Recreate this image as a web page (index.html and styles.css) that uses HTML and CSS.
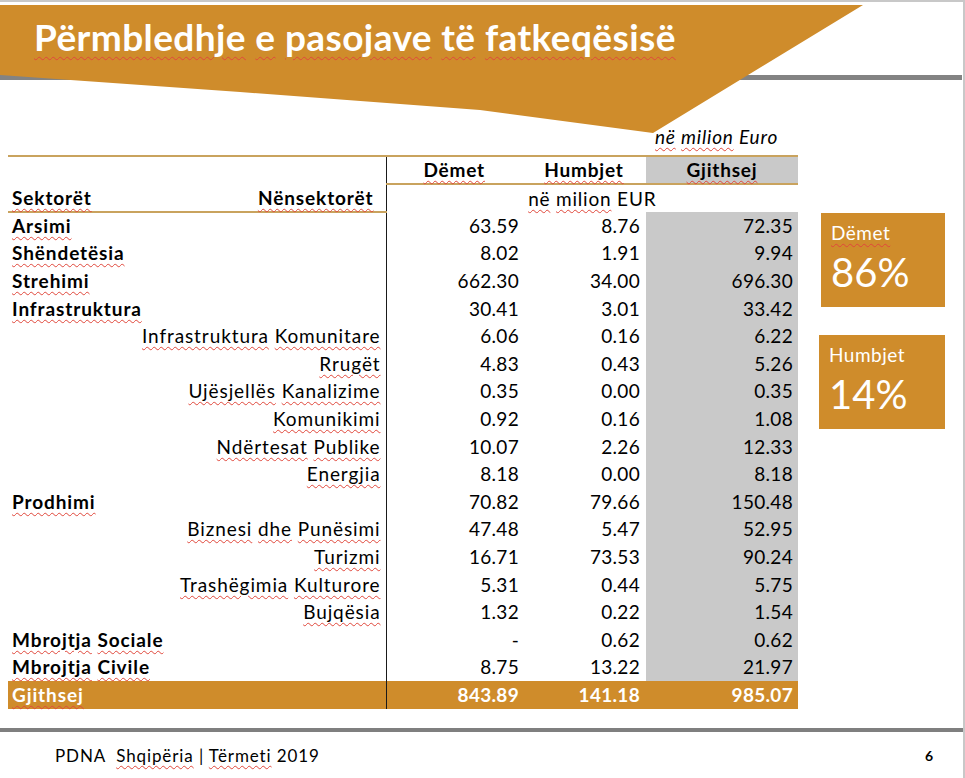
FILE: index.html
```html
<!DOCTYPE html>
<html lang="sq">
<head>
<meta charset="utf-8">
<title>Përmbledhje e pasojave të fatkeqësisë</title>
<link rel="stylesheet" href="styles.css">
</head>
<body>
<div class="slide">
  <header class="head">
    <svg class="banner" width="965" height="140" viewBox="0 0 965 140" aria-hidden="true">
      <rect x="0" y="75" width="962" height="5" fill="#838383"/>
      <polygon points="0,5 863,5 653,133 480,110 240,92 0,75" fill="#cf8c2b"/>
    </svg>
    <h1 class="title"><span class="sp">Përmbledhje</span> <span class="sp">e</span> <span class="sp">pasojave</span> <span class="sp">të</span> <span class="sp">fatkeqësisë</span></h1>
    <div class="unit"><span class="sp">në</span> <span class="sp">milion</span> Euro</div>
  </header>

  <main class="body">
    <table class="tbl">
      <colgroup>
        <col class="c-label"><col class="c-dem"><col class="c-hum"><col class="c-tot">
      </colgroup>
      <thead>
        <tr class="h1">
          <th class="lab"></th>
          <th class="num-h"><span class="sp">Dëmet</span></th>
          <th class="num-h"><span class="sp">Humbjet</span></th>
          <th class="num-h tot"><span class="sp">Gjithsej</span></th>
        </tr>
        <tr class="h2">
          <th class="lab split"><span class="sp">Sektorët</span><span class="sp">Nënsektorët</span></th>
          <th colspan="3" class="unit2"><span class="sp">në</span> <span class="sp">milion</span> EUR</th>
        </tr>
      </thead>
      <tbody>
        <tr><td class="lab sec"><span class="sp">Arsimi</span></td><td>63.59</td><td>8.76</td><td class="tot">72.35</td></tr>
        <tr><td class="lab sec"><span class="sp">Shëndetësia</span></td><td>8.02</td><td>1.91</td><td class="tot">9.94</td></tr>
        <tr><td class="lab sec"><span class="sp">Strehimi</span></td><td>662.30</td><td>34.00</td><td class="tot">696.30</td></tr>
        <tr><td class="lab sec"><span class="sp">Infrastruktura</span></td><td>30.41</td><td>3.01</td><td class="tot">33.42</td></tr>
        <tr><td class="lab sub"><span class="sp">Infrastruktura</span> <span class="sp">Komunitare</span></td><td>6.06</td><td>0.16</td><td class="tot">6.22</td></tr>
        <tr><td class="lab sub"><span class="sp">Rrugët</span></td><td>4.83</td><td>0.43</td><td class="tot">5.26</td></tr>
        <tr><td class="lab sub"><span class="sp">Ujësjellës</span> <span class="sp">Kanalizime</span></td><td>0.35</td><td>0.00</td><td class="tot">0.35</td></tr>
        <tr><td class="lab sub"><span class="sp">Komunikimi</span></td><td>0.92</td><td>0.16</td><td class="tot">1.08</td></tr>
        <tr><td class="lab sub"><span class="sp">Ndërtesat</span> <span class="sp">Publike</span></td><td>10.07</td><td>2.26</td><td class="tot">12.33</td></tr>
        <tr><td class="lab sub"><span class="sp">Energjia</span></td><td>8.18</td><td>0.00</td><td class="tot">8.18</td></tr>
        <tr><td class="lab sec"><span class="sp">Prodhimi</span></td><td>70.82</td><td>79.66</td><td class="tot">150.48</td></tr>
        <tr><td class="lab sub"><span class="sp">Biznesi</span> <span class="sp">dhe</span> <span class="sp">Punësimi</span></td><td>47.48</td><td>5.47</td><td class="tot">52.95</td></tr>
        <tr><td class="lab sub"><span class="sp">Turizmi</span></td><td>16.71</td><td>73.53</td><td class="tot">90.24</td></tr>
        <tr><td class="lab sub"><span class="sp">Trashëgimia</span> <span class="sp">Kulturore</span></td><td>5.31</td><td>0.44</td><td class="tot">5.75</td></tr>
        <tr><td class="lab sub"><span class="sp">Bujqësia</span></td><td>1.32</td><td>0.22</td><td class="tot">1.54</td></tr>
        <tr><td class="lab sec"><span class="sp">Mbrojtja</span> <span class="sp">Sociale</span></td><td>-</td><td>0.62</td><td class="tot">0.62</td></tr>
        <tr><td class="lab sec"><span class="sp">Mbrojtja</span> <span class="sp">Civile</span></td><td>8.75</td><td>13.22</td><td class="tot">21.97</td></tr>
      </tbody>
      <tfoot>
        <tr class="total"><td class="lab sec"><span class="sp">Gjithsej</span></td><td>843.89</td><td>141.18</td><td>985.07</td></tr>
      </tfoot>
    </table>

    <aside class="stats">
      <div class="stat s1">
        <div class="stat-label"><span class="sp">Dëmet</span></div>
        <div class="stat-val">86%</div>
      </div>
      <div class="stat s2">
        <div class="stat-label">Humbjet</div>
        <div class="stat-val">14%</div>
      </div>
    </aside>
  </main>

  <footer class="foot">
    <div class="foot-text">PDNA&nbsp; <span class="sp">Shqipëria</span> | <span class="sp">Tërmeti</span> 2019</div>
    <div class="page">6</div>
  </footer>
</div>
</body>
</html>
```

FILE: styles.css
```css
* { box-sizing: border-box; }
html, body { margin: 0; padding: 0; background: #ffffff; }
body { font-family: Lato, "Open Sans", "Liberation Sans", sans-serif; color: #000; }

.slide {
  width: 965px;
  height: 778px;
  position: relative;
  overflow: hidden;
  background: #fff;
  border-top: 2px solid #c8c8c8;
  border-right: 2px solid #c8c8c8;
  display: flex;
  flex-direction: column;
}

.sp {
  text-decoration: underline wavy #e0473b;
  text-decoration-thickness: 1px;
  text-underline-offset: 3px;
}

/* header */
.head {
  position: relative;
  height: 153px;
  flex: none;
}
.banner {
  position: absolute;
  left: 0;
  top: -2px;
}
.title {
  position: relative;
  margin: 0;
  padding: 13px 0 0 34px;
  font-family: Lato, "Open Sans", sans-serif;
  font-weight: 700;
  font-size: 37px;
  line-height: 44px;
  color: #fff;
  letter-spacing: 0.4px;
}
.title .sp { text-underline-offset: 5px; }
.unit {
  position: relative;
  margin: 67px 0 0 655px;
  font-style: italic;
  font-size: 19px;
  line-height: 22px;
  letter-spacing: 0.8px;
}

/* body */
.body {
  display: flex;
  align-items: flex-start;
  height: 555px;
  flex: none;
}
.tbl {
  margin-left: 8px;
  border-collapse: collapse;
  table-layout: fixed;
  width: 790px;
  font-size: 19px;
  letter-spacing: 0.3px;
}
.c-label { width: 378px; }
.c-dem { width: 136px; }
.c-hum { width: 124px; }
.c-tot { width: 152px; }

.tbl th, .tbl td {
  padding: 0;
  height: 27.6px;
  line-height: 22px;
  white-space: nowrap;
  vertical-align: middle;
}
.tbl td { text-align: right; }
.tbl td:nth-child(2) { padding-right: 3px; }
.tbl td:nth-child(3) { padding-right: 6px; }
.tbl td:nth-child(4) { padding-right: 5px; }

.tbl .lab {
  border-right: 1.5px solid #1a1a1a;
  text-align: left;
  letter-spacing: 0.9px;
}
.tbl .sec { font-weight: 700; padding-left: 4px; }
.tbl .sub { text-align: right; padding-right: 5px; }

.h1 th { border-top: 2px solid #c9a35e; height: 28px; }
.h1 .num-h {
  border-bottom: 2px solid #c9a35e;
  font-weight: 700;
  text-align: center;
  letter-spacing: 0.8px;
}
.tot { background: #c9c9c9; }

.h2 th { height: 28px; }
.h2 .split {
  border-bottom: 2px solid #c9a35e;
  font-weight: 700;
  padding: 0 12px 0 4px;
}
.split .sp:first-child { float: left; }
.split .sp:last-child { float: right; }
.unit2 { font-weight: 400; text-align: center; letter-spacing: 0.8px; }

.total td {
  background: #cf8c2b;
  color: #fff;
  font-weight: 700;
  height: 28px;
}
.total .lab { padding-left: 4px; }

/* stats */
.stats {
  margin-left: 21px;
  padding-top: 58px;
  display: flex;
  flex-direction: column;
  gap: 28px;
}
.stat {
  background: #cf8c2b;
  color: #fff;
  width: 126px;
  height: 94px;
  padding: 8px 0 0 10px;
}
.s1 { margin-left: 2px; width: 124px; }
.stat-label { font-size: 19px; line-height: 24px; letter-spacing: 0.5px; }
.stat-val { font-size: 40px; line-height: 46px; margin-top: 4px; }
.stat .sp { text-underline-offset: 3px; }

/* footer */
.foot {
  border-top: 4px solid #7f7f7f;
  margin-top: 18px;
  flex: 1;
  display: flex;
  align-items: flex-start;
  justify-content: space-between;
  padding: 13px 29px 0 55px;
  font-size: 17px;
  letter-spacing: 0.9px;
}
.foot-text { line-height: 22px; }
.page { font-weight: 700; font-size: 14px; line-height: 22px; }
```
